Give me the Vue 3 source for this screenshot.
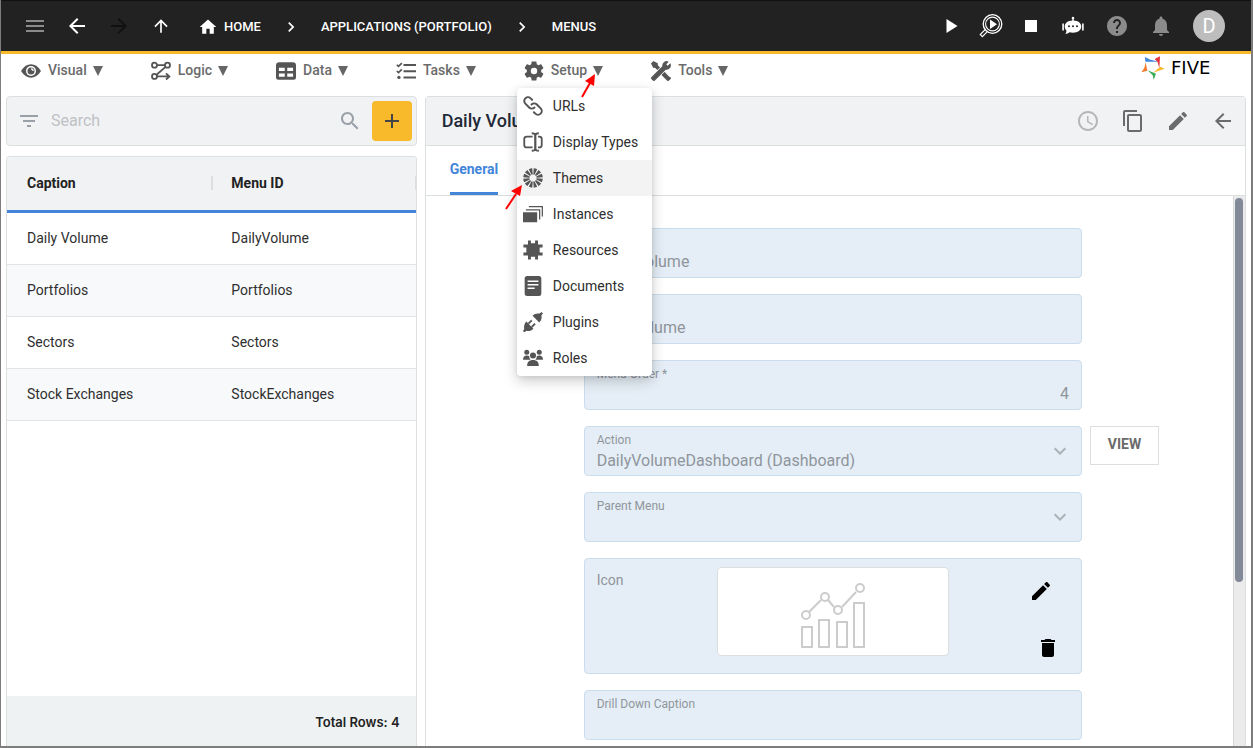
<script setup>
import { ref } from 'vue'

const icons = {
  menu: '<path d="M3 18h18v-2H3v2zm0-5h18v-2H3v2zm0-7v2h18V6H3z"/>',
  back: '<path d="M20 11H7.83l5.59-5.59L12 4l-8 8 8 8 1.41-1.41L7.83 13H20v-2z"/>',
  forward: '<path d="M12 4l-1.41 1.41L16.17 11H4v2h12.17l-5.58 5.59L12 20l8-8z"/>',
  up: '<path d="M4 12l1.41 1.41L11 7.83V20h2V7.83l5.58 5.59L20 12l-8-8-8 8z"/>',
  home: '<path d="M10 20v-6h4v6h5v-8h3L12 3 2 12h3v8z"/>',
  chevron: '<path d="M10 6L8.59 7.41 13.17 12l-4.58 4.59L10 18l6-6z"/>',
  play: '<path d="M7.500 5v14l11-7z"/>',
  debug: '<g fill="none" stroke="currentColor"><circle cx="13.500" cy="10" r="9.300" stroke-width="1.300"/><circle cx="13.500" cy="10" r="6.900" stroke-width="1.100"/><path d="M6.600 15.200L1.300 20.600l2 2L8.600 17.300" stroke-width="1.200"/></g><path d="M11 5.500v9.500l7-4.800z"/>',
  stop: '<path d="M6 6h12v12H6z"/>',
  bot: '<path d="M12 2.800a1.300 1.300 0 0 1 .7 2.400v1.200c4.500.2 7.600 2.700 7.600 6.100 0 3.500-3.500 6.200-8.300 6.200-1.400 0-2.400-.2-3.500-.5-1.300 1.200-2.700 1.700-4.200 1.700.8-.9 1.200-1.900 1.200-3.200-1.200-1.100-1.800-2.600-1.800-4.200 0-3.400 3.100-5.900 7.600-6.100V5.200a1.300 1.300 0 0 1 .7-2.400z"/><path d="M1.300 9.500h1.600v7H1.300zM21.100 9.500h1.600v7h-1.600z"/><g fill="#222"><circle cx="8" cy="12.300" r="1"/><circle cx="12" cy="12.300" r="1"/><circle cx="16" cy="12.300" r="1"/></g>',
  help: '<path d="M12 2C6.480 2 2 6.480 2 12s4.480 10 10 10 10-4.480 10-10S17.520 2 12 2zm1 17h-2v-2h2v2zm2.070-7.750l-.9.920C13.450 12.900 13 13.500 13 15h-2v-.5c0-1.100.450-2.100 1.170-2.830l1.240-1.260c.370-.360.590-.860.590-1.410 0-1.100-.9-2-2-2s-2 .9-2 2H8c0-2.210 1.790-4 4-4s4 1.790 4 4c0 .880-.360 1.680-.930 2.250z"/>',
  bell: '<path d="M12 22c1.100 0 2-.9 2-2h-4c0 1.100.890 2 2 2zm6-6v-5c0-3.070-1.640-5.640-4.500-6.320V4c0-.830-.670-1.500-1.500-1.500s-1.500.670-1.500 1.500v.680C7.630 5.360 6 7.920 6 11v5l-2 2v1h16v-1l-2-2z"/>',
  copy: '<path d="M16 1H4c-1.100 0-2 .9-2 2v14h2V3h12V1zm3 4H8c-1.100 0-2 .9-2 2v14c0 1.100.9 2 2 2h11c1.100 0 2-.9 2-2V7c0-1.100-.9-2-2-2zm0 16H8V7h11v14z"/>',
  edit: '<path d="M3 17.250V21h3.750L17.810 9.940l-3.750-3.750L3 17.250zM20.710 7.040c.390-.390.390-1.020 0-1.410l-2.340-2.340c-.390-.390-1.020-.390-1.410 0l-1.830 1.830 3.750 3.750 1.830-1.830z"/>',
  trash: '<path d="M6 19c0 1.100.9 2 2 2h8c1.100 0 2-.9 2-2V7H6v12zM19 4h-3.500l-1-1h-5l-1 1H5v2h14V4z"/>',
  search: '<path d="M15.500 14h-.790l-.280-.270C15.410 12.590 16 11.110 16 9.500 16 5.910 13.090 3 9.500 3S3 5.910 3 9.500 5.910 16 9.500 16c1.610 0 3.090-.590 4.230-1.570l.270.280v.790l5 4.990L20.490 19l-4.990-5zm-6 0C7.010 14 5 11.990 5 9.500S7.010 5 9.500 5 14 7.010 14 9.500 11.990 14 9.500 14z"/>',
  filter: '<path d="M10 18h4v-2h-4v2zM3 6v2h18V6H3zm3 7h12v-2H6v2z"/>',
  add: '<path d="M19 13h-6v6h-2v-6H5v-2h6V5h2v6h6v2z"/>',
  clock: '<path d="M11.990 2C6.470 2 2 6.480 2 12s4.470 10 9.990 10C17.520 22 22 17.520 22 12S17.520 2 11.990 2zM12 20c-4.420 0-8-3.580-8-8s3.580-8 8-8 8 3.580 8 8-3.580 8-8 8zM12.500 7H11v6l5.250 3.150.750-1.230-4.500-2.670z"/>',
  down: '<path d="M16.590 8.590L12 13.170 7.410 8.590 6 10l6 6 6-6z"/>',
  visual: '<path d="M0 12C3.500 6.500 7.500 4 12 4s8.500 2.500 12 8c-3.500 5.500-7.500 8-12 8S3.500 17.500 0 12z"/><circle cx="12" cy="12" r="6" fill="#fff"/><circle cx="12" cy="12" r="4.200"/><path d="M12 9.500a2.500 2.500 0 0 1 2.500 2.500" fill="none" stroke="#fff" stroke-width="1.400"/>',
  logic: '<g fill="none" stroke="currentColor" stroke-width="2.200"><circle cx="4.200" cy="5" r="3"/><circle cx="19.800" cy="5" r="3"/><circle cx="4.200" cy="18.500" r="3"/><path d="M7.200 5h9.600M17.500 7L6.600 16.500M7.200 18.500H21M18 14.800l4 3.700-4 3.700"/></g>',
  data: '<path fill-rule="evenodd" d="M4 1.500h16a4 4 0 0 1 4 4v14a3 3 0 0 1-3 3H3a3 3 0 0 1-3-3v-14a4 4 0 0 1 4-4zM3.500 8v4h7V8zM13.500 8v4h7V8zM3.500 15v4h7v-4zM13.500 15v4h7v-4z"/>',
  tasks: '<path d="M9 3.500h15V6H9zM9 11h15v2.500H9zM9 18.500h15V21H9z"/><path d="M1 4.500l2 2 4-4M1 12l2 2 4-4" fill="none" stroke="currentColor" stroke-width="2"/><circle cx="3.500" cy="19.700" r="2"/>',
  setup: '<path transform="translate(-2.400 -2.400) scale(1.200)" d="M19.140 12.940c.040-.3.060-.610.060-.940 0-.320-.020-.640-.070-.940l2.030-1.580c.180-.140.230-.410.120-.610l-1.920-3.320c-.120-.220-.370-.290-.590-.220l-2.390.960c-.5-.380-1.030-.7-1.620-.940l-.360-2.540c-.040-.240-.240-.410-.480-.410h-3.840c-.240 0-.430.170-.470.410l-.360 2.540c-.590.240-1.130.570-1.620.940l-2.390-.960c-.220-.080-.470 0-.590.220L2.740 8.870c-.120.210-.080.470.120.610l2.030 1.580c-.050.3-.090.630-.090.940s.020.640.070.940l-2.030 1.580c-.180.140-.230.410-.120.610l1.920 3.320c.120.220.370.290.590.220l2.390-.960c.5.380 1.030.7 1.620.940l.360 2.540c.050.240.240.410.480.410h3.840c.240 0 .440-.170.470-.410l.360-2.540c.590-.240 1.130-.560 1.620-.940l2.390.960c.220.080.470 0 .590-.220l1.920-3.320c.120-.220.070-.470-.120-.610l-2.010-1.580zM12 15.200a3.200 3.200 0 1 1 0-6.400 3.200 3.200 0 0 1 0 6.400z"/>',
  tools: '<path transform="translate(25.400 -1.400) scale(-1.120 1.120)" d="M21.710 20.290L20.290 21.710A1 1 0 0 1 18.880 21.710L7 9.850A3.810 3.810 0 0 1 6 10A4 4 0 0 1 2.220 4.700L4.760 7.240L5.290 6.710L6.710 5.290L7.240 4.760L4.700 2.220A4 4 0 0 1 10 6A3.810 3.810 0 0 1 9.850 7L21.710 18.880A1 1 0 0 1 21.710 20.290M2.290 18.880A1 1 0 0 0 2.290 20.290L3.710 21.710A1 1 0 0 0 5.120 21.710L10.590 16.250L7.760 13.420M20 2L16 4V6L13.830 8.170L15.830 10.170L18 8H20L22 4Z" stroke="currentColor" stroke-width="1.200"/>',
  urls: '<g transform="rotate(45 12 12)" fill="none" stroke="currentColor" stroke-width="2.400" stroke-linecap="round"><path d="M14.500 12a4.500 4.500 0 0 1-4.500 4.500H3.500a4.500 4.500 0 0 1 0-9H6"/><path d="M9.500 12A4.500 4.500 0 0 1 14 7.500h6.500a4.500 4.500 0 0 1 0 9H18"/></g>',
  display: '<g fill="none" stroke="currentColor" stroke-width="2.200"><path d="M11.500 5.500H4.500a3 3 0 0 0-3 3v7a3 3 0 0 0 3 3h7M18 5.500h1.500a3 3 0 0 1 3 3v7a3 3 0 0 1-3 3H18M10.500 1.500c2.500 0 4 .8 4 2.500v16c0 1.700-1.500 2.500-4 2.500M19 1.500c-2.500 0-4 .8-4 2.500v16c0 1.700 1.500 2.500 4 2.500"/></g>',
  themes: '<circle cx="12" cy="12" r="8" fill="none" stroke="currentColor" stroke-width="7.500" pathLength="120" stroke-dasharray="7 3" stroke-dashoffset="-1.500"/>',
  instances: '<path d="M0 10h17v12H0z"/><path d="M3.500 7h16.500v11.500M7 3.200h16.200V15" fill="none" stroke="currentColor" stroke-width="1.500"/>',
  resources: '<path d="M6 .5h3.500v3.500h5V.5H18v5h5.500V9H20v6h3.500v3.500H18v5h-3.500V20h-5v3.500H6v-5H.5V15H4V9H.5V5.500H6z"/>',
  documents: '<path fill-rule="evenodd" d="M5 0h14a3 3 0 0 1 3 3v18a3 3 0 0 1-3 3H5a3 3 0 0 1-3-3V3a3 3 0 0 1 3-3zM5.500 5.500v1.800h13V5.500zM5.500 9.600v1.800h13V9.600zM5.500 13.700v1.800h8.500v-1.800z"/>',
  plugins: '<path d="M11.500 4.500l8 8c2.500-2 3.300-5.800 2.600-8.500L24 1.700 22.300 0 20 1.900c-2.700-.7-6.500.1-8.500 2.600zM4 11.500l8.500 8.500c-2 2.500-5.800 3.300-8.500 2.600L1.700 24.500 0 22.800 1.500 20.500c-.7-2.700 0-6.500 2.500-9z"/><path d="M6.500 14l4-4M10.500 18l4-4" stroke="currentColor" stroke-width="2.200"/>',
  roles: '<circle cx="4.500" cy="5" r="3"/><circle cx="19.500" cy="5" r="3"/><circle cx="12" cy="9" r="3.600"/><path d="M0 14c0-3 1.500-5 4.500-5 1.200 0 2.200.4 3 1 0 1.700.6 3 1.700 4zM24 14c0-3-1.500-5-4.500-5-1.200 0-2.200.4-3 1 0 1.700-.6 3-1.700 4zM5 21.500c0-4.500 2.500-7 7-7s7 2.500 7 7z"/>'
}

const menus = [
  { icon: 'visual', label: 'Visual' },
  { icon: 'logic', label: 'Logic' },
  { icon: 'data', label: 'Data' },
  { icon: 'tasks', label: 'Tasks' },
  {
    icon: 'setup',
    label: 'Setup',
    items: [
      { icon: 'urls', label: 'URLs' },
      { icon: 'display', label: 'Display Types' },
      { icon: 'themes', label: 'Themes', active: true },
      { icon: 'instances', label: 'Instances' },
      { icon: 'resources', label: 'Resources' },
      { icon: 'documents', label: 'Documents' },
      { icon: 'plugins', label: 'Plugins' },
      { icon: 'roles', label: 'Roles' }
    ]
  },
  { icon: 'tools', label: 'Tools' }
]

const rows = [
  ['Daily Volume', 'DailyVolume'],
  ['Portfolios', 'Portfolios'],
  ['Sectors', 'Sectors'],
  ['Stock Exchanges', 'StockExchanges']
]

const search = ref('')
</script>

<template>
  <div class="app">
    <header class="topbar">
      <button class="tool dim" aria-label="Menu"><svg class="i24" viewBox="0 0 24 24" v-html="icons.menu" /></button>
      <button class="tool" aria-label="Back"><svg class="i24" viewBox="0 0 24 24" v-html="icons.back" /></button>
      <button class="tool off" aria-label="Forward"><svg class="i24" viewBox="0 0 24 24" v-html="icons.forward" /></button>
      <button class="tool" aria-label="Up"><svg class="i20" viewBox="0 0 24 24" v-html="icons.up" /></button>
      <nav class="crumbs" aria-label="Breadcrumb">
        <a href="#"><svg class="i20" viewBox="0 0 24 24" v-html="icons.home" />HOME</a>
        <svg class="i20" viewBox="0 0 24 24" v-html="icons.chevron" />
        <a href="#">APPLICATIONS (PORTFOLIO)</a>
        <svg class="i20" viewBox="0 0 24 24" v-html="icons.chevron" />
        <a href="#">MENUS</a>
      </nav>
      <div class="actions">
        <button aria-label="Run"><svg class="i24" viewBox="0 0 24 24" v-html="icons.play" /></button>
        <button aria-label="Debug"><svg class="i24" viewBox="0 0 24 24" v-html="icons.debug" /></button>
        <button aria-label="Stop"><svg class="i24" viewBox="0 0 24 24" v-html="icons.stop" /></button>
        <button class="wide" aria-label="Assistant"><svg class="i24" viewBox="0 0 24 24" v-html="icons.bot" /></button>
        <button class="wide dim" aria-label="Help"><svg class="i24" viewBox="0 0 24 24" v-html="icons.help" /></button>
        <button class="wide dim" aria-label="Notifications"><svg class="i24" viewBox="0 0 24 24" v-html="icons.bell" /></button>
        <button class="avatar">D</button>
      </div>
    </header>

    <div class="menubar">
      <nav class="menus" aria-label="Main">
        <div v-for="m in menus" :key="m.label" class="menu">
          <button class="menu-button">
            <svg class="i20" viewBox="0 0 24 24" v-html="icons[m.icon]" />
            <span>{{ m.label }}</span>
            <svg class="caret" viewBox="0 0 10 10"><path d="M0 0h10L5 10z" /></svg>
          </button>
          <template v-if="m.items">
            <div class="dropdown">
              <button v-for="it in m.items" :key="it.label" :class="{ active: it.active }">
                <svg class="i20" viewBox="0 0 24 24" v-html="icons[it.icon]" />{{ it.label }}
              </button>
            </div>
            <svg class="pointer to-caret" viewBox="0 0 18 26"><path d="M2 24L10 10" stroke="#f00" stroke-width="2" /><path d="M15 1L14 13 5 8z" fill="#f00" /></svg>
            <svg class="pointer to-themes" viewBox="0 0 18 26"><path d="M1 25L11 10" stroke="#f00" stroke-width="2" /><path d="M17 1L15 12 6 7z" fill="#f00" /></svg>
          </template>
        </div>
      </nav>
      <a class="brand" href="#">
        <svg viewBox="0 0 72 72">
          <path fill="#3f86dc" d="M12 3l16 8 20 5-1 1H13z" />
          <path fill="#e5333b" d="M41 9l16-8-2 36-5-18z" />
          <path fill="#fbb829" d="M71 38L36 50l22-18z" />
          <path fill="#3bab55" d="M20 43l25 10-7 18-3-13z" />
          <path fill="#f5792b" d="M14 19l5 25-18 5 9-13z" />
        </svg>
        <span>FIVE</span>
      </a>
    </div>

    <main class="panes">
      <section class="list">
        <div class="card searchbar">
          <svg class="i24 grey" viewBox="0 0 24 24" v-html="icons.filter" />
          <input v-model="search" type="text" placeholder="Search" aria-label="Search" />
          <svg class="i24 grey" viewBox="0 0 24 24" v-html="icons.search" />
          <button class="add" aria-label="Add"><svg class="i24" viewBox="0 0 24 24" v-html="icons.add" /></button>
        </div>
        <div class="card grid">
          <table>
            <thead>
              <tr><th><div>Caption</div></th><th><div>Menu ID</div></th></tr>
            </thead>
            <tbody>
              <tr v-for="r in rows" :key="r[1]"><td>{{ r[0] }}</td><td>{{ r[1] }}</td></tr>
            </tbody>
          </table>
          <footer>Total Rows: 4</footer>
        </div>
      </section>

      <section class="card detail">
        <div class="head">
          <h1>Daily Volume</h1>
          <button class="faint" aria-label="History"><svg class="i24" viewBox="0 0 24 24" v-html="icons.clock" /></button>
          <button aria-label="Copy"><svg class="i24" viewBox="0 0 24 24" v-html="icons.copy" /></button>
          <button aria-label="Edit"><svg class="i24" viewBox="0 0 24 24" v-html="icons.edit" /></button>
          <button aria-label="Close"><svg class="i24" viewBox="0 0 24 24" v-html="icons.back" /></button>
        </div>
        <div class="tabs"><button>General</button></div>
        <div class="scroller">
          <form @submit.prevent>
            <div class="field"><label for="caption">Caption *</label><input id="caption" type="text" value="Daily Volume" disabled /></div>
            <div class="field"><label for="menuid">Menu ID *</label><input id="menuid" type="text" value="DailyVolume" disabled /></div>
            <div class="field"><label for="order">Menu Order *</label><input id="order" class="num" type="text" value="4" disabled /></div>
            <div class="field">
              <label for="action">Action</label>
              <select id="action" disabled><option>DailyVolumeDashboard (Dashboard)</option></select>
              <svg class="i24 arrow" viewBox="0 0 24 24" v-html="icons.down" />
            </div>
            <button class="view" type="button">VIEW</button>
            <div class="field">
              <label for="parent">Parent Menu</label>
              <select id="parent" disabled><option></option></select>
              <svg class="i24 arrow" viewBox="0 0 24 24" v-html="icons.down" />
            </div>
            <div class="field picture">
              <span class="name">Icon</span>
              <div class="preview">
                <svg viewBox="0 0 66 66" fill="none" stroke="#ccc" stroke-width="2">
                  <path d="M2 44h10v20H2zM19 37h10v27H19zM37 39h10v25H37zM54 20h10v44H54z" />
                  <path d="M9 29L21 17M28 17l6 7M42 24L56 9" />
                  <circle cx="6" cy="32" r="4" /><circle cx="25" cy="14" r="4" /><circle cx="38" cy="27" r="4" /><circle cx="60" cy="5" r="4" />
                </svg>
              </div>
              <div class="picture-actions">
                <button class="change" type="button" aria-label="Change icon"><svg class="i24" viewBox="0 0 24 24" v-html="icons.edit" /></button>
                <button type="button" aria-label="Remove icon"><svg class="i24" viewBox="0 0 24 24" v-html="icons.trash" /></button>
              </div>
            </div>
            <div class="field"><label for="drill">Drill Down Caption</label><input id="drill" type="text" disabled /></div>
          </form>
          <div class="track"><div class="thumb"></div></div>
        </div>
      </section>
    </main>
  </div>
</template>

<style>
html, body { margin: 0; }
</style>

<style scoped>
.app {
  box-sizing: border-box;
  height: 100vh;
  display: flex;
  flex-direction: column;
  overflow: hidden;
  border: solid #7d7d7d;
  border-width: 0 2px 2px 1px;
  background: #fff;
  color: #2f2f2f;
  font: 14px/20px Roboto, "Open Sans", sans-serif;
}
.app *, .app *::before, .app *::after { box-sizing: border-box; }
button {
  display: flex;
  align-items: center;
  justify-content: center;
  padding: 0;
  border: 0;
  background: none;
  color: inherit;
  font: inherit;
  cursor: pointer;
}
a { color: inherit; text-decoration: none; }
svg { display: block; flex: none; fill: currentColor; }
.i24 { width: 24px; height: 24px; }
.i20 { width: 20px; height: 20px; }

.topbar {
  flex: none;
  display: flex;
  align-items: center;
  height: 54px;
  padding: 0 28px 0 14px;
  margin: 0 -2px 0 -1px;
  border-top: 1px solid #111;
  border-bottom: 3px solid #f8b92b;
  background: #222;
  color: #fff;
}
.topbar .tool { width: 42px; height: 42px; }
.topbar .dim { color: #8b8b8b; }
.topbar .off { color: #111; }
.crumbs { display: flex; align-items: center; gap: 20px; padding: 2px 0 0 16px; font-size: 13px; font-weight: 500; }
.crumbs a { display: flex; align-items: center; gap: 6px; }
.actions { display: flex; align-items: center; gap: 16px; margin-left: auto; }
.actions .wide { width: 28px; }
.topbar .avatar {
  width: 32px;
  height: 32px;
  margin-left: 2px;
  border-radius: 50%;
  background: #bdbdbd;
  font-size: 20px;
}

.menubar { flex: none; display: flex; align-items: flex-start; justify-content: space-between; height: 42px; padding: 0 22px 0 20px; }
.menus { display: flex; gap: 48px; }
.menu { position: relative; }
.menu-button { gap: 7px; height: 34px; color: #6b6b6b; font-weight: 500; }
.menu-button span { padding-bottom: 2px; }
.menu-button .i20 { color: #555; }
.caret { width: 10px; height: 10px; margin-left: -1px; fill: #666; }
.dropdown {
  position: absolute;
  z-index: 2;
  top: 34px;
  left: -7px;
  width: max-content;
  border-radius: 4px;
  overflow: hidden;
  background: #fff;
  box-shadow: 0 5px 14px rgba(0, 0, 0, 0.2), 0 1px 5px rgba(0, 0, 0, 0.08);
}
.dropdown button { justify-content: flex-start; gap: 10px; width: 100%; height: 36px; padding: 0 14px 0 6px; color: #2f2f2f; }
.dropdown button.active { background: #f3f3f3; }
.dropdown .i20 { color: #555; }
.pointer { position: absolute; z-index: 3; width: 18px; height: 26px; }
.to-caret { top: 19px; left: 56px; }
.to-themes { top: 130px; left: -19px; }
.brand { display: flex; align-items: center; gap: 6px; height: 28px; color: #000; }
.brand svg { width: 24px; height: 24px; }
.brand span { min-width: 58px; font: 18px/24px "DejaVu Sans", sans-serif; }

.panes { flex: 1; min-height: 0; display: grid; grid-template-columns: minmax(0, 1fr) minmax(0, 2fr); gap: 8px; padding: 0 5px; }
.card { border: 1px solid #dcdfe0; border-radius: 4px; }
.list { display: flex; flex-direction: column; gap: 10px; min-height: 0; }
.searchbar { display: flex; align-items: center; height: 50px; padding: 0 4px 0 10px; background: #f1f2f4; }
.searchbar input { flex: 1; min-width: 0; padding: 0 10px; border: 0; outline: 0; background: none; font: 16px/24px Roboto, sans-serif; }
.searchbar input::placeholder { color: #bfc1c4; }
.grey { color: #99a0a8; }
.add { width: 40px; height: 40px; margin-left: 10px; border-radius: 4px; background: #f8b92b; color: #444; }
.grid { flex: 1; min-height: 0; display: flex; flex-direction: column; border-bottom: 0; border-radius: 4px 4px 0 0; overflow: hidden; }
table { width: 100%; table-layout: fixed; border-collapse: separate; border-spacing: 0; }
th { height: 56px; padding: 0 0 1px; border-bottom: 3px solid #4285d9; background: #f1f2f4; color: #222; text-align: left; font-weight: 700; }
th div { height: 14px; padding-left: 20px; line-height: 14px; }
th + th div { padding-left: 18px; border: solid #dcdfe0; border-width: 0 1px 0 2px; }
td { height: 52px; padding: 0 20px 2px; border-bottom: 1px solid #e1e4e6; }
tbody tr:nth-child(even) { background: #f8f9fa; }
.grid footer { height: 50px; margin-top: auto; padding: 0 16px; background: #eef2f3; color: #222; text-align: right; font: 600 13px/52px Inter, sans-serif; }

.detail { display: flex; flex-direction: column; min-height: 0; border-bottom: 0; border-radius: 4px 4px 0 0; }
.head { flex: none; display: flex; align-items: center; gap: 21px; height: 49px; padding: 0 10px 0 16px; border-bottom: 1px solid #dcdfe0; background: #f1f2f4; color: #6b6b6b; }
.head h1 { flex: 1; margin: 0; color: #1f2937; font-size: 18px; font-weight: 500; }
.faint { color: #b4b6b8; }
.tabs { flex: none; display: flex; height: 50px; padding-left: 24px; border-bottom: 1px solid #dcdfe0; }
.tabs button { height: 49px; border-bottom: 3px solid #4285d9; color: #4285d9; font-weight: 700; }
.scroller { flex: 1; min-height: 0; display: flex; overflow: hidden; }
form { flex: 1; display: grid; grid-template-columns: minmax(0, 1fr) 69px; align-content: start; gap: 16px 8px; padding: 32px 74px 0 158px; }
.field { position: relative; grid-column: 1; height: 50px; border: 1px solid #cbdcec; border-radius: 4px; background: #e5eef6; color: #8f959c; }
.field label { display: block; height: 22px; padding: 5px 12px 0; font-size: 12px; line-height: 16px; }
.field input, .field select {
  display: block;
  width: 100%;
  height: 24px;
  padding: 0 12px;
  border: 0;
  appearance: none;
  background: none;
  color: #8f959c;
  opacity: 1;
  font: 16px/24px Roboto, sans-serif;
}
.field input { height: 22px; }
.field .num { text-align: right; }
.arrow { position: absolute; top: 12px; right: 9px; color: #a9b1b8; }
.view { height: 39px; padding-bottom: 3px; border: 1px solid #dcdfe0; color: #6b6b6b; font-weight: 700; }
.picture { display: grid; grid-template-columns: 1fr 232px 1fr; height: 116px; padding-top: 8px; }
.name { padding: 3px 12px; }
.preview { display: flex; align-items: center; justify-content: center; height: 89px; padding-top: 8px; border: 1px solid #dcdfe0; border-radius: 4px; background: #fff; }
.preview svg { width: 66px; height: 66px; fill: none; }
.picture-actions { display: flex; flex-direction: column; align-items: flex-end; gap: 33px; padding: 12px 21px 0 0; color: #000; }
.change { margin-right: 7px; }
.track { flex: none; width: 12px; padding: 2px 2px 0 1px; border-left: 1px solid #d8d8d8; background: #ebebeb; }
.thumb { height: 70%; border-radius: 4px; background: #828999; }
</style>
